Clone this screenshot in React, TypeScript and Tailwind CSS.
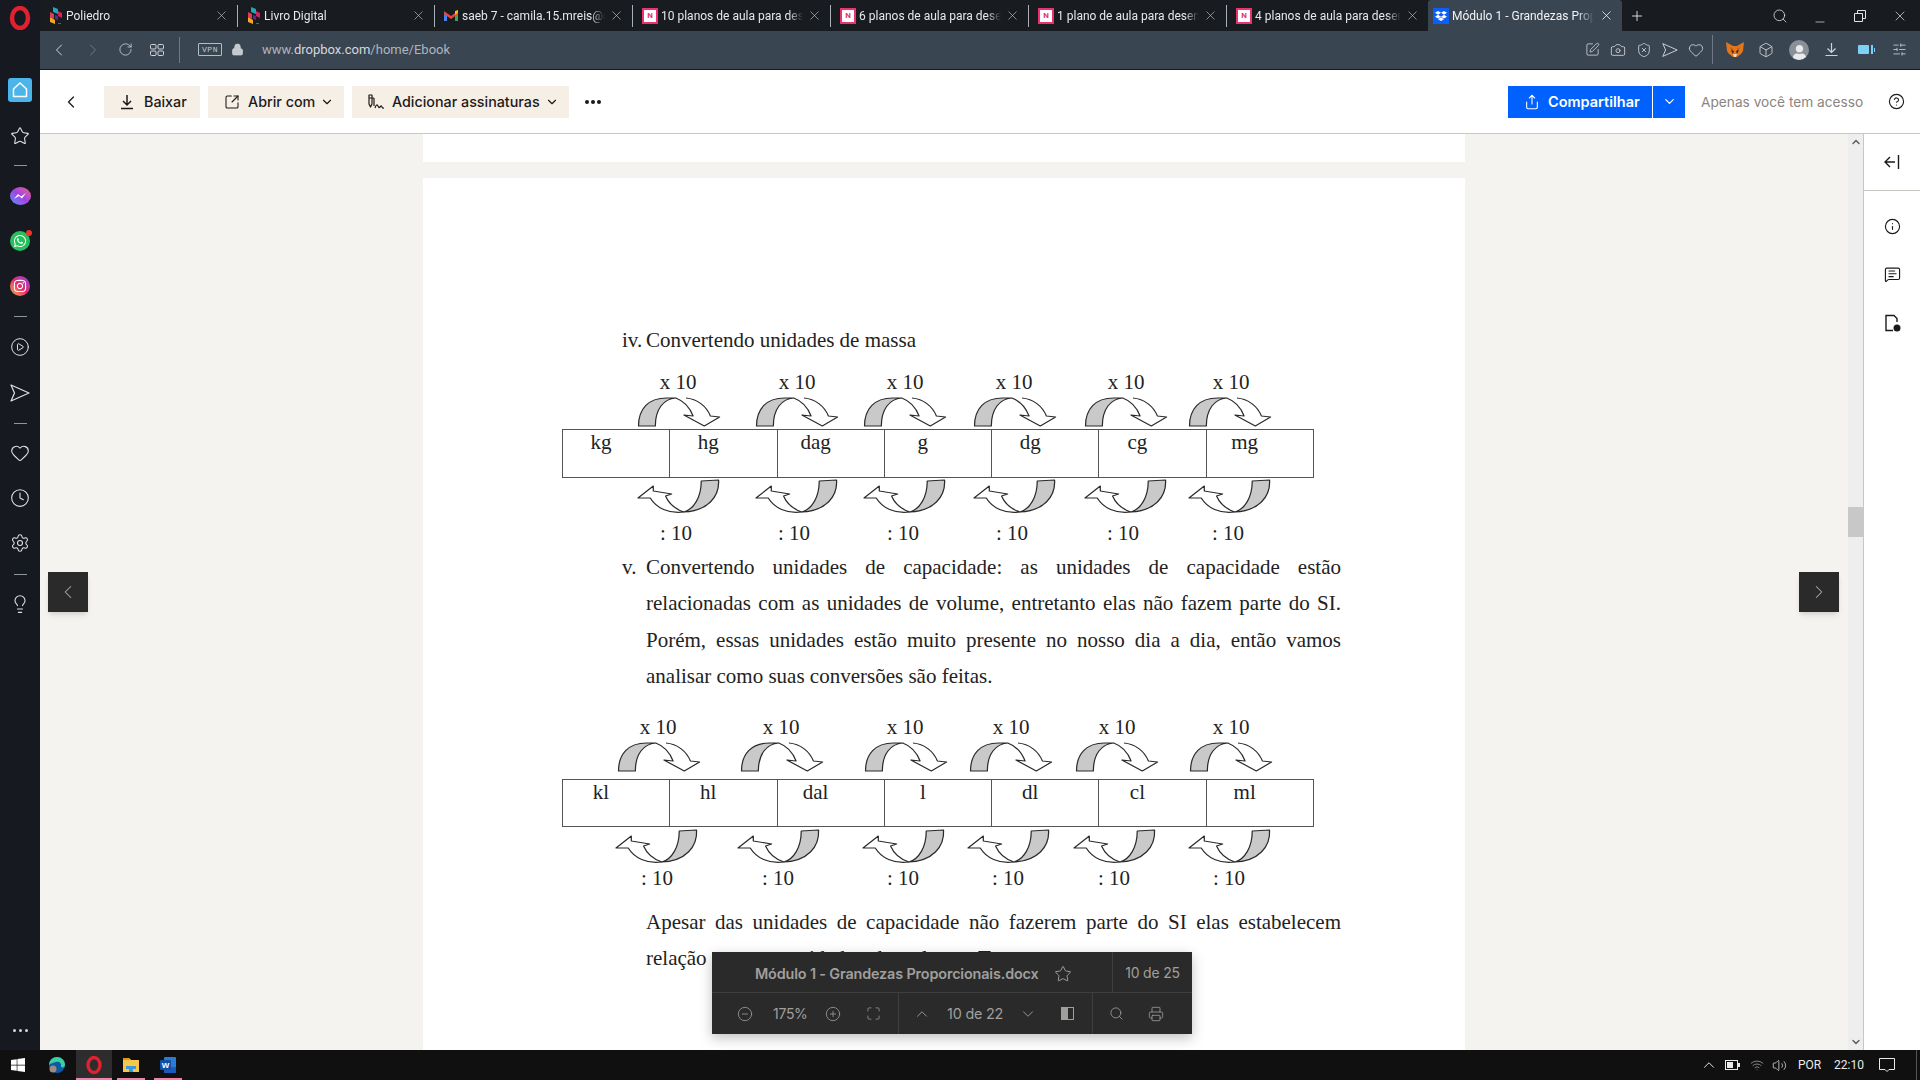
import React from "react";
import {
  X, Plus, Search, Minus, ChevronLeft, ChevronRight, RotateCw, Lock, ChevronDown, ChevronUp,
  Share, CircleHelp, Info, Star, Heart, Clock, Settings, Lightbulb, Camera, ShieldX, Box, SlidersHorizontal,
  CircleMinus, CirclePlus, Maximize, Printer, Volume2, Wifi, CirclePlay, MessageSquareText, SquarePen, SquareArrowOutUpRight,
} from "lucide-react";
import { FaWindows, FaWhatsapp, FaInstagram, FaDropbox, FaUser } from "react-icons/fa";

const serif = { fontFamily: '"Liberation Serif", serif' };

function Opera({ size = 24 }: { size?: number }) {
  return (
    <svg width={size} height={size} viewBox="0 0 24 24" fill="none">
      <ellipse cx="12" cy="12" rx="8" ry="10" stroke="#e0212f" strokeWidth="4.5" />
    </svg>
  );
}

function PlaneIcon({ size, className }: { size: number; className?: string }) {
  return (
    <svg width={size} height={size} viewBox="0 0 20 20" fill="none" stroke="currentColor" strokeWidth="1.2" strokeLinejoin="round" className={className}>
      <path d="M1 2 L19 10 L1 18 L4.5 10 Z" />
    </svg>
  );
}

function Poliedro() {
  return (
    <svg width="14" height="18" viewBox="0 0 14 18" className="shrink-0">
      <path d="M4 0l5 2v5L4 5z" fill="#1ba8b8" />
      <path d="M9 4l4 2v5l-4-2z" fill="#d81e5b" />
      <path d="M1 5l4 2v5L1 10z" fill="#e0395b" />
      <path d="M1 10l5 3v4l-5-2z" fill="#f5a623" />
      <path d="M6 8l3 1v4l-3-1z" fill="#5b2a86" />
      <path d="M9 16h3v1H9z" fill="#2563eb" />
    </svg>
  );
}

function Gmail() {
  return (
    <svg width="14" height="11" viewBox="0 0 14 11" className="shrink-0">
      <path d="M0 2v9h3V4z" fill="#4285f4" />
      <path d="M14 2v9h-3V4z" fill="#34a853" />
      <path d="M0 1l7 5 7-5v3L7 9 0 4z" fill="#ea4335" />
      <path d="M11 1l3-1v3l-3 2z" fill="#fbbc04" />
    </svg>
  );
}

function NIcon() {
  return (
    <div className="w-[16px] h-[16px] shrink-0 bg-white border-2 border-[#e8336d] flex items-center justify-center text-[#e8336d] text-[8px] font-bold leading-none">
      N
    </div>
  );
}

function Tab({ icon, text, w, gap, last }: { icon: React.ReactNode; text: string; w: string; gap: string; last?: boolean }) {
  return (
    <div className={`${w} h-[31px] flex items-center pl-[9px] shrink-0 relative`}>
      {icon}
      <span className={`${gap} flex-1 min-w-0 overflow-hidden whitespace-nowrap text-[12px] text-[#e6e8ea] [mask-image:linear-gradient(to_right,black_90%,transparent)]`}>
        {text}
      </span>
      <X size={15} strokeWidth={1} className="text-[#c9cdd2] ml-[4px] mr-[8px] shrink-0" />
      {!last && <div className="w-px h-[22px] bg-[#a9b0b8] shrink-0" />}
    </div>
  );
}

function TopArrow({ x }: { x: number }) {
  return (
    <g transform={`translate(${x} 0) scale(1.02 1)`} stroke="#2a2a2a" strokeWidth="1.2" strokeLinejoin="round">
      <path d="M0.5 29 C0.5 12 10 1 28 1 L37 1 C25 2 17 12 17 29 Z" fill="#c9c9c9" />
      <path d="M37 1 C45 4 51 11 54 19 L45 18 L65 29 L80 20 L71 19 C67 9 58 2 47 1" fill="#fff" />
    </g>
  );
}

function BottomArrow({ x }: { x: number }) {
  return (
    <g transform={`translate(${x} 0) scale(1.02 1)`} stroke="#2a2a2a" strokeWidth="1.2" strokeLinejoin="round">
      <path d="M62 2 L79 1 C80 18 68 32 45 33 C55 30 62 18 62 2 Z" fill="#c9c9c9" />
      <path d="M45 33 C36 30 30 24 27 17 L33 15 L15 12 L15 7 L0 19 L12 19 C18 29 30 35 45 33 Z" fill="#fff" />
    </g>
  );
}

function Labels({ text, centers, className }: { text: string; centers: number[]; className: string }) {
  return (
    <div className={`flex h-[24px] leading-[24px] text-[21px] text-[#222] ${className}`}>
      {centers.map((c, i) => (
        <div key={i} className="w-[60px] text-center shrink-0" style={{ marginLeft: c - (i ? centers[i - 1] : 0) - (i ? 60 : 30) }}>
          {text}
        </div>
      ))}
    </div>
  );
}

function Table({ cells, className }: { cells: string[]; className: string }) {
  return (
    <div className={`w-[752px] -ml-px flex border border-[#555] ${className}`}>
      {cells.map((c, i) => (
        <div key={c} className={`flex-1 ${i ? "border-l border-[#555]" : ""}`}>
          <div className="w-[76px] text-center text-[21px] leading-[25px] text-[#222]">{c}</div>
        </div>
      ))}
    </div>
  );
}

function Diagram(props: {
  topLabels: number[]; topArrows: number[]; bottomArrows: number[]; bottomLabels: number[]; cells: string[];
  c1: string; c2: string; c3: string; c4: string; c5: string; tableH: string;
}) {
  return (
    <div className="ml-[140px]">
      <Labels text="x 10" centers={props.topLabels} className={props.c1} />
      <svg width="750" height="30" className={`block ${props.c2}`}>
        {props.topArrows.map((x) => <TopArrow key={x} x={x} />)}
      </svg>
      <Table cells={props.cells} className={`${props.c3} ${props.tableH}`} />
      <svg width="750" height="35" className={`block ${props.c4}`}>
        {props.bottomArrows.map((x) => <BottomArrow key={x} x={x} />)}
      </svg>
      <Labels text=": 10" centers={props.bottomLabels} className={props.c5} />
    </div>
  );
}

function Just({ children }: { children: React.ReactNode }) {
  return <div className="text-justify [text-align-last:justify] whitespace-nowrap">{children}</div>;
}

function SideLine({ className }: { className: string }) {
  return <div className={`w-[13px] h-px bg-[#8f959c] ${className}`} />;
}

function Sidebar() {
  const line = "text-[#dfe2e5]";
  return (
    <aside className="w-[40px] shrink-0 h-full bg-[#16191f] flex flex-col items-center pt-[6px]">
      <Opera size={24} />
      <div className="mt-[48px] w-[24px] h-[24px] rounded-[3px] bg-[#4bb4ea] flex items-center justify-center">
        <svg width="18" height="18" viewBox="0 0 18 18" fill="none" stroke="#fff" strokeWidth="1.5" strokeLinejoin="round"><path d="M2.5 8 L9 2 L15.5 8 V15.5 H2.5 Z" /></svg>
      </div>
      <Star size={20} strokeWidth={1.3} className={`mt-[24px] ${line}`} />
      <SideLine className="mt-[19px]" />
      <div className="mt-[21px] w-[21px] h-[18px] rounded-[50%] bg-gradient-to-tr from-[#2f8cf5] via-[#a33ee8] to-[#f0567a] flex items-center justify-center mb-[1px]">
        <svg width="14" height="8" viewBox="0 0 14 8"><path d="M1 7l4-5 3 2.5L13 1 9 6.5 6 4z" fill="#fff" /></svg>
      </div>
      <div className="mt-[25px] w-[20px] h-[20px] rounded-full bg-[#25c15c] flex items-center justify-center relative">
        <FaWhatsapp size={14} className="text-white" />
        <div className="absolute -top-[1px] -right-[2px] w-[6px] h-[6px] rounded-full bg-[#f0322d]" />
      </div>
      <div className="mt-[25px] w-[20px] h-[20px] rounded-full bg-gradient-to-tr from-[#f5a623] via-[#e5246f] to-[#8a2be2] flex items-center justify-center">
        <FaInstagram size={14} className="text-white" />
      </div>
      <SideLine className="mt-[20px]" />
      <CirclePlay size={20} strokeWidth={1.2} className={`mt-[20px] ${line}`} />
      <PlaneIcon size={20} className={`mt-[26px] ${line}`} />
      <SideLine className="mt-[20px]" />
      <Heart size={20} strokeWidth={1.3} className={`mt-[19px] ${line}`} />
      <Clock size={20} strokeWidth={1.3} className={`mt-[25px] ${line}`} />
      <Settings size={20} strokeWidth={1.3} className={`mt-[25px] ${line}`} />
      <SideLine className="mt-[21px]" />
      <Lightbulb size={20} strokeWidth={1.3} className={`mt-[19px] ${line}`} />
      <div className="mt-auto mb-[18px] flex gap-[3px]">
        <div className="w-[3px] h-[3px] rounded-full bg-[#d5d8db]" />
        <div className="w-[3px] h-[3px] rounded-full bg-[#d5d8db]" />
        <div className="w-[3px] h-[3px] rounded-full bg-[#d5d8db]" />
      </div>
    </aside>
  );
}

function TabBar() {
  return (
    <div className="h-[31px] flex items-center bg-[#181b20] shrink-0" style={{ fontFamily: 'Roboto, sans-serif' }}>
      <Tab w="w-[198px]" gap="ml-[3px]" icon={<Poliedro />} text="Poliedro" />
      <Tab w="w-[197px]" gap="ml-[3px]" icon={<Poliedro />} text="Livro Digital" />
      <Tab w="w-[198px]" gap="ml-[4px]" icon={<Gmail />} text="saeb 7 - camila.15.mreis@gmail" />
      <Tab w="w-[198px]" gap="ml-[3px]" icon={<NIcon />} text="10 planos de aula para desenvolver" />
      <Tab w="w-[198px]" gap="ml-[3px]" icon={<NIcon />} text="6 planos de aula para desenvolver" />
      <Tab w="w-[198px]" gap="ml-[3px]" icon={<NIcon />} text="1 plano de aula para desenvolver" />
      <Tab w="w-[201px]" gap="ml-[3px]" icon={<NIcon />} text="4 planos de aula para desenvolver" last />
      <div className="w-[194px] h-[31px] bg-[#3a4552] rounded-t-[3px] flex items-center pl-[5px] shrink-0">
        <div className="w-[16px] h-[16px] bg-[#0d5ef5] flex items-center justify-center shrink-0">
          <FaDropbox size={12} className="text-white" />
        </div>
        <span className="ml-[3px] flex-1 min-w-0 overflow-hidden whitespace-nowrap text-[12px] text-[#f2f3f4] [mask-image:linear-gradient(to_right,black_88%,transparent)]">
          Módulo 1 - Grandezas Proporcionais.docx
        </span>
        <X size={15} strokeWidth={1.2} className="text-white ml-[5px] mr-[8px] shrink-0" />
      </div>
      <Plus size={16} strokeWidth={1.2} className="text-white ml-[7px]" />
      <Search size={16} strokeWidth={1.2} className="text-[#e2e4e7] ml-[127px]" />
      <Minus size={14} strokeWidth={1.2} className="text-[#e2e4e7] ml-[25px] mt-[12px]" />
      <svg width="12" height="12" viewBox="0 0 12 12" fill="none" stroke="#e2e4e7" className="ml-[27px]"><path d="M.5 3.5h8v8h-8zM3.5 3V.5h8v8H9" /></svg>
      <X size={16} strokeWidth={1.1} className="text-[#e2e4e7] ml-[26px]" />
    </div>
  );
}

function AddressBar() {
  const c = "text-[#d0d4d8]";
  return (
    <div className="h-[39px] bg-[#3a4552] border-b border-[#16191f] shrink-0 flex items-center pb-[1px]">
      <ChevronLeft size={20} strokeWidth={1.2} className={`ml-[9px] ${c}`} />
      <ChevronRight size={20} strokeWidth={1.2} className="ml-[14px] text-[#6f7a86]" />
      <RotateCw size={15} strokeWidth={1.3} className={`ml-[15px] ${c}`} />
      <svg width="14" height="12" viewBox="0 0 14 12" fill="none" stroke="#d0d4d8" className="ml-[17px]"><rect x=".5" y=".5" width="5.5" height="4.5" rx="1" /><rect x="8" y=".5" width="5.5" height="4.5" rx="1" /><rect x=".5" y="7" width="5.5" height="4.5" rx="1" /><rect x="8" y="7" width="5.5" height="4.5" rx="1" /></svg>
      <div className="w-px h-[26px] bg-[#6f7a86] ml-[15px]" />
      <div className="ml-[18px] w-[24px] h-[13px] border border-[#b7bcc2] rounded-[1px] text-[8px] tracking-[0.5px] leading-[11px] text-center text-[#c3c8cd]" style={{ fontFamily: '"Liberation Mono", monospace' }}>VPN</div>
      <Lock size={13} fill="#c3c8cd" strokeWidth={1.5} className={`ml-[9px] ${c}`} />
      <div className="ml-[18px] w-[200px] text-[13px] whitespace-nowrap" style={{ fontFamily: 'Roboto, sans-serif' }}>
        <span className="text-[#aeb5bc]">www.</span><span className="text-[#d5d8db]">dropbox.com</span><span className="text-[#aeb5bc]">/home/Ebook</span>
      </div>
      <div className="ml-auto flex items-center">
        <SquarePen size={15} strokeWidth={1.3} className={c} />
        <Camera size={16} strokeWidth={1.3} className={`ml-[10px] ${c}`} />
        <ShieldX size={16} strokeWidth={1.3} className={`ml-[10px] ${c}`} />
        <PlaneIcon size={16} className={`ml-[10px] ${c}`} />
        <Heart size={16} strokeWidth={1.3} className={`ml-[10px] ${c}`} />
        <div className="w-px h-[29px] bg-[#6f7a86] ml-[8px]" />
        <svg width="18" height="17" viewBox="0 0 18 17" className="ml-[13px]">
          <path d="M0 1l7 4h4l7-4-1 9-2 3-4 3H7l-4-3-2-3z" fill="#e2761b" />
          <path d="M4 6l3 2v4zM14 6l-3 2v4z" fill="#c0560f" />
          <path d="M5 9l3 1-1 3zM13 9l-3 1 1 3z" fill="#3a2a20" />
          <path d="M7 13h4l-1 3H8z" fill="#f3d9c0" />
        </svg>
        <Box size={16} strokeWidth={1.3} className={`ml-[14px] ${c}`} />
        <div className="ml-[15px] w-[20px] h-[20px] rounded-full bg-[#8a9098] flex items-end justify-center overflow-hidden">
          <FaUser size={15} className="text-[#e8eaec]" />
        </div>
        <svg width="15" height="15" viewBox="0 0 15 15" fill="none" stroke="#d0d4d8" strokeWidth="1.2" className="ml-[15px]"><path d="M7.5 1v9M3.5 6.5l4 4 4-4M1.5 13.5h12" /></svg>
        <div className="ml-[19px] flex items-center">
          <div className="w-[11px] h-[9px] rounded-[1px] bg-[#7fd0f5]" />
          <div className="w-[2px] h-[9px] bg-[#7fd0f5] ml-[2px]" />
          <div className="w-[1px] h-[4px] bg-[#7fd0f5] ml-[1px]" />
        </div>
        <SlidersHorizontal size={15} strokeWidth={1.3} className={`ml-[17px] mr-[13px] ${c}`} />
      </div>
    </div>
  );
}

function BeigeBtn({ className, children }: { className: string; children: React.ReactNode }) {
  return <div className={`h-[32px] bg-[#f5efe6] flex items-center text-[14.3px] font-medium text-[#1e1919] ${className}`}>{children}</div>;
}

function Toolbar() {
  return (
    <div className="h-[64px] bg-white border-b border-[#c9c7c2] shrink-0 flex items-center" style={{ fontFamily: 'Inter, sans-serif' }}>
      <ChevronLeft size={20} strokeWidth={1.5} className="ml-[21px] text-[#1e1919]" />
      <BeigeBtn className="ml-[23px] w-[96px] pl-[15px]">
        <svg width="16" height="16" viewBox="0 0 16 16" fill="none" stroke="#1e1919" strokeWidth="1.5"><path d="M8 1v10M4 7l4 4 4-4M2 14.5h12" /></svg>
        <span className="ml-[9px] mt-[1px]">Baixar</span>
      </BeigeBtn>
      <BeigeBtn className="ml-[8px] w-[136px] pl-[16px]"><SquareArrowOutUpRight size={16} strokeWidth={1.6} /><span className="ml-[8px] mt-[1px]">Abrir com</span><ChevronDown size={14} className="ml-[5px]" /></BeigeBtn>
      <BeigeBtn className="ml-[8px] w-[217px] pl-[15px]">
        <svg width="18" height="18" viewBox="0 0 18 18" fill="none" stroke="#1e1919" strokeWidth="1.2" strokeLinejoin="round"><path d="M2 2h3v9l-1.5 3L2 11zM2 5h3M7 5v8M7 5h-2" /><path d="M8 15c1-3 2-4 3-2s1 2 2 1 1-2 2 0 1 1 2 1" /></svg>
        <span className="ml-[7px] mt-[1px] whitespace-nowrap">Adicionar assinaturas</span><ChevronDown size={14} className="ml-[5px]" />
      </BeigeBtn>
      <div className="ml-[16px] flex gap-[2px]">
        <div className="w-[4px] h-[4px] rounded-full bg-[#1e1919]" />
        <div className="w-[4px] h-[4px] rounded-full bg-[#1e1919]" />
        <div className="w-[4px] h-[4px] rounded-full bg-[#1e1919]" />
      </div>
      <div className="ml-auto flex items-center">
        <div className="w-[144px] h-[32px] bg-[#0061fe] text-white flex items-center pl-[16px] text-[14.5px] font-semibold">
          <Share size={16} strokeWidth={1.6} /><span className="ml-[8px]">Compartilhar</span>
        </div>
        <div className="ml-px w-[32px] h-[32px] bg-[#0061fe] text-white flex items-center justify-center"><ChevronDown size={15} /></div>
        <span className="ml-[16px] mt-[1px] w-[163px] text-[13.7px] text-[#8a8580] whitespace-nowrap">Apenas você tem acesso</span>
        <CircleHelp size={17} strokeWidth={1.6} className="ml-[24px] mr-[15px] text-[#1e1919]" />
      </div>
    </div>
  );
}

function Page() {
  return (
    <div className="w-[1042px] ml-[383px] bg-white pt-[144px] text-[#222]" style={serif}>
      <div className="ml-[199px] leading-[36px] h-[36px] text-[21px] flex">
        <span className="w-[24px]">iv.</span><span>Convertendo unidades de massa</span>
      </div>
      <Diagram
        c1="mt-[12px]" c2="mt-[3px]" c3="mt-[2px]" c4="mt-[1px]" c5="mt-[7px]" tableH="h-[49px]"
        topLabels={[115, 234, 342, 451, 563, 668]}
        topArrows={[75, 193, 301, 411, 522, 626]}
        bottomArrows={[75, 193, 301, 411, 522, 626]}
        bottomLabels={[113, 231, 340, 449, 560, 665]}
        cells={["kg", "hg", "dag", "g", "dg", "cg", "mg"]}
      />
      <div className="mt-[4px] ml-[199px] w-[719px] text-[21px] leading-[36.3px] flex">
        <span className="w-[24px] shrink-0">v.</span>
        <div className="w-[695px]">
          <Just>Convertendo unidades de capacidade: as unidades de capacidade estão</Just>
          <Just>relacionadas com as unidades de volume, entretanto elas não fazem parte do SI.</Just>
          <Just>Porém, essas unidades estão muito presente no nosso dia a dia, então vamos</Just>
          <div>analisar como suas conversões são feitas.</div>
        </div>
      </div>
      <div className="h-[21px]" />
      <Diagram
        c1="" c2="mt-[3px]" c3="mt-[7px]" c4="mt-[2px]" c5="mt-[2px]" tableH="h-[48px]"
        topLabels={[95, 218, 342, 448, 554, 668]}
        topArrows={[55, 178, 302, 407, 513, 627]}
        bottomArrows={[53, 175, 300, 405, 511, 626]}
        bottomLabels={[94, 215, 340, 445, 551, 666]}
        cells={["kl", "hl", "dal", "l", "dl", "cl", "ml"]}
      />
      <div className="mt-[14px] ml-[223px] w-[695px] text-[21px] leading-[36.3px]">
        <Just>Apesar das unidades de capacidade não fazerem parte do SI elas estabelecem</Just>
        <div className="whitespace-nowrap [word-spacing:4px]">relação com as unidades de volume. Temos que a</div>
      </div>
      <div className="h-[200px]" />
    </div>
  );
}

function DocBar() {
  const ic = "text-[#a09f9c]";
  return (
    <div className="absolute left-[672px] top-[818px] w-[480px] h-[82px] bg-[#2b2a2a] shadow-[0_4px_12px_rgba(0,0,0,0.25)] text-[#a09f9c] text-[14px] flex flex-col" style={{ fontFamily: 'Inter, sans-serif' }}>
      <div className="h-[41px] flex items-center border-b border-[#3f3e3e]">
        <span className="ml-[43px] mt-[3px] text-[14.4px] font-semibold whitespace-nowrap tracking-[-0.15px]">Módulo 1 - Grandezas Proporcionais.docx</span>
        <Star size={18} strokeWidth={1.3} className={`ml-[15px] mt-[3px] ${ic}`} />
        <div className="ml-auto w-[80px] h-full border-l border-[#3f3e3e] flex items-center justify-center tracking-[-0.2px]">10 de 25</div>
      </div>
      <div className="h-[41px] flex items-center">
        <CircleMinus size={16} strokeWidth={1.2} className={`ml-[25px] ${ic}`} />
        <span className="ml-[20px] w-[34px] tracking-[-0.3px] whitespace-nowrap">175%</span>
        <CirclePlus size={16} strokeWidth={1.2} className={`ml-[18px] ${ic}`} />
        <Maximize size={15} strokeWidth={1.2} className={`ml-[25px] ${ic}`} />
        <div className="ml-[17px] w-px h-full bg-[#3f3e3e]" />
        <ChevronUp size={18} strokeWidth={1.2} className={`ml-[14px] ${ic}`} />
        <span className="ml-[16px] w-[57px] whitespace-nowrap text-[14.4px] tracking-[-0.2px]">10 de 22</span>
        <ChevronDown size={18} strokeWidth={1.2} className={`ml-[15px] ${ic}`} />
        <div className="ml-[24px] w-[13px] h-[13px] border border-[#a09f9c] flex">
          <div className="w-1/2 bg-[#a09f9c]" />
        </div>
        <div className="ml-[18px] w-px h-full bg-[#3f3e3e]" />
        <Search size={15} strokeWidth={1.3} className={`ml-[16px] ${ic}`} />
        <Printer size={16} strokeWidth={1.2} className={`ml-[24px] ${ic}`} />
      </div>
    </div>
  );
}

function Viewer() {
  return (
    <div className="flex-1 flex min-h-0">
      <div className="flex-1 relative bg-[#f5f3ef] overflow-hidden">
        <div className="w-[1042px] ml-[383px] h-[28px] bg-white mb-[16px]" />
        <Page />
        <div className="absolute left-[8px] top-[438px] w-[40px] h-[40px] bg-[#2b2a2a] flex items-center justify-center shadow-md">
          <ChevronLeft size={22} strokeWidth={1.1} className="text-[#b0afac]" />
        </div>
        <div className="absolute left-[1759px] top-[438px] w-[40px] h-[40px] bg-[#2b2a2a] flex items-center justify-center shadow-md">
          <ChevronRight size={22} strokeWidth={1.1} className="text-[#b0afac]" />
        </div>
        <DocBar />
      </div>
      <div className="w-[15px] bg-[#eeeeee] flex flex-col items-center shrink-0">
        <ChevronUp size={12} strokeWidth={3} className="text-[#606060] mt-[2px]" />
        <div className="w-full h-[30px] bg-[#c8c8c8] mt-[359px]" />
        <ChevronDown size={12} strokeWidth={3} className="text-[#606060] mt-auto mb-[2px]" />
      </div>
      <div className="w-[57px] shrink-0 bg-white border-l border-[#c9c7c2] flex flex-col items-center text-[#1e1919]">
        <div className="w-full h-[57px] border-b border-[#c9c7c2] flex items-center justify-center">
          <svg width="18" height="18" viewBox="0 0 18 18" fill="none" stroke="#1e1919" strokeWidth="1.4"><path d="M15.5 2v14M12 9H2M7 4L2 9l5 5" /></svg>
        </div>
        <Info size={17} strokeWidth={1.6} className="mt-[27px]" />
        <MessageSquareText size={17} strokeWidth={1.6} className="mt-[31px]" />
        <svg width="17" height="18" viewBox="0 0 17 18" fill="none" stroke="#1e1919" strokeWidth="1.4" className="mt-[31px]">
          <path d="M9 16.5H2V1.5h8l3 3V8" />
          <circle cx="13" cy="14" r="3.5" fill="#1e1919" stroke="none" />
        </svg>
      </div>
    </div>
  );
}

function TaskIcon({ className, children, on }: { className: string; children: React.ReactNode; on?: boolean }) {
  return (
    <div className={`h-full flex items-center justify-center relative ${className}`}>
      {children}
      {on && <div className="absolute bottom-0 left-0 right-0 h-[2px] bg-[#f083a8]" />}
    </div>
  );
}

function Taskbar() {
  return (
    <div className="h-[30px] bg-[#101010] shrink-0 flex items-center text-[#eaeaea] text-[12px]" style={{ fontFamily: 'Roboto, sans-serif' }}>
      <FaWindows size={16} className="ml-[10px] text-white" />
      <svg width="16" height="16" viewBox="0 0 16 16" className="ml-[23px] shrink-0">
        <circle cx="8" cy="8" r="8" fill="#0c59a4" />
        <path d="M0 8a8 8 0 0 1 16 0c0 2-2 3-4 2 1-4-2-6-5-5S2 6 0 8z" fill="#3ad1a0" />
        <circle cx="4" cy="12" r="3.5" fill="#a08a80" />
      </svg>
      <TaskIcon className="ml-[11px] w-[36px] bg-[#2d2d2d]" on><Opera size={18} /></TaskIcon>
      <TaskIcon className="ml-[5px] w-[28px]" on>
        <svg width="16" height="14" viewBox="0 0 16 14"><path d="M0 0h6l2 2h8v12H0z" fill="#f5c84b" /><path d="M0 0h6l2 2H0z" fill="#d99a1c" /><path d="M3 8h10v3h-3v3H6v-3H3z" fill="#3d9ad9" /></svg>
      </TaskIcon>
      <TaskIcon className="ml-[9px] w-[28px]" on>
        <svg width="16" height="16" viewBox="0 0 16 16"><rect x="4" width="12" height="16" rx="1" fill="#2b7cd3" /><rect x="4" y="10" width="12" height="6" fill="#185abd" /><rect y="3" width="11" height="10" rx="1" fill="#124da8" /><text x="5.5" y="11" textAnchor="middle" fontSize="8" fontWeight="700" fill="#fff" fontFamily="Liberation Sans">W</text></svg>
      </TaskIcon>
      <div className="ml-auto flex items-center">
        <ChevronUp size={18} strokeWidth={1.3} />
        <svg width="15" height="10" viewBox="0 0 15 10" fill="none" className="ml-[7px]"><rect x=".5" y=".5" width="12" height="9" stroke="#eaeaea" /><rect x="2" y="2" width="6" height="6" fill="#eaeaea" /><rect x="13" y="3" width="2" height="4" fill="#eaeaea" /></svg>
        <Wifi size={14} strokeWidth={1.2} className="ml-[10px] text-[#b5b5b5]" />
        <Volume2 size={15} strokeWidth={1.2} className="ml-[8px]" />
        <span className="ml-[11px] w-[24px]">POR</span>
        <span className="ml-[12px] w-[27px]">22:10</span>
        <svg width="16" height="15" viewBox="0 0 16 15" fill="none" stroke="#eaeaea" className="ml-[18px]"><path d="M.5.5h15v11H10l-2 2-2-2H.5z" /></svg>
        <div className="ml-[21px] w-px h-full min-h-[30px] bg-[#555] mr-[3px]" />
      </div>
    </div>
  );
}

export default function App() {
  return (
    <div className="w-[1920px] h-[1080px] overflow-hidden flex flex-col bg-[#101010]">
      <div className="flex-1 min-h-0 flex">
        <Sidebar />
        <div className="flex-1 min-w-0 flex flex-col">
          <TabBar />
          <AddressBar />
          <Toolbar />
          <Viewer />
        </div>
      </div>
      <Taskbar />
    </div>
  );
}
